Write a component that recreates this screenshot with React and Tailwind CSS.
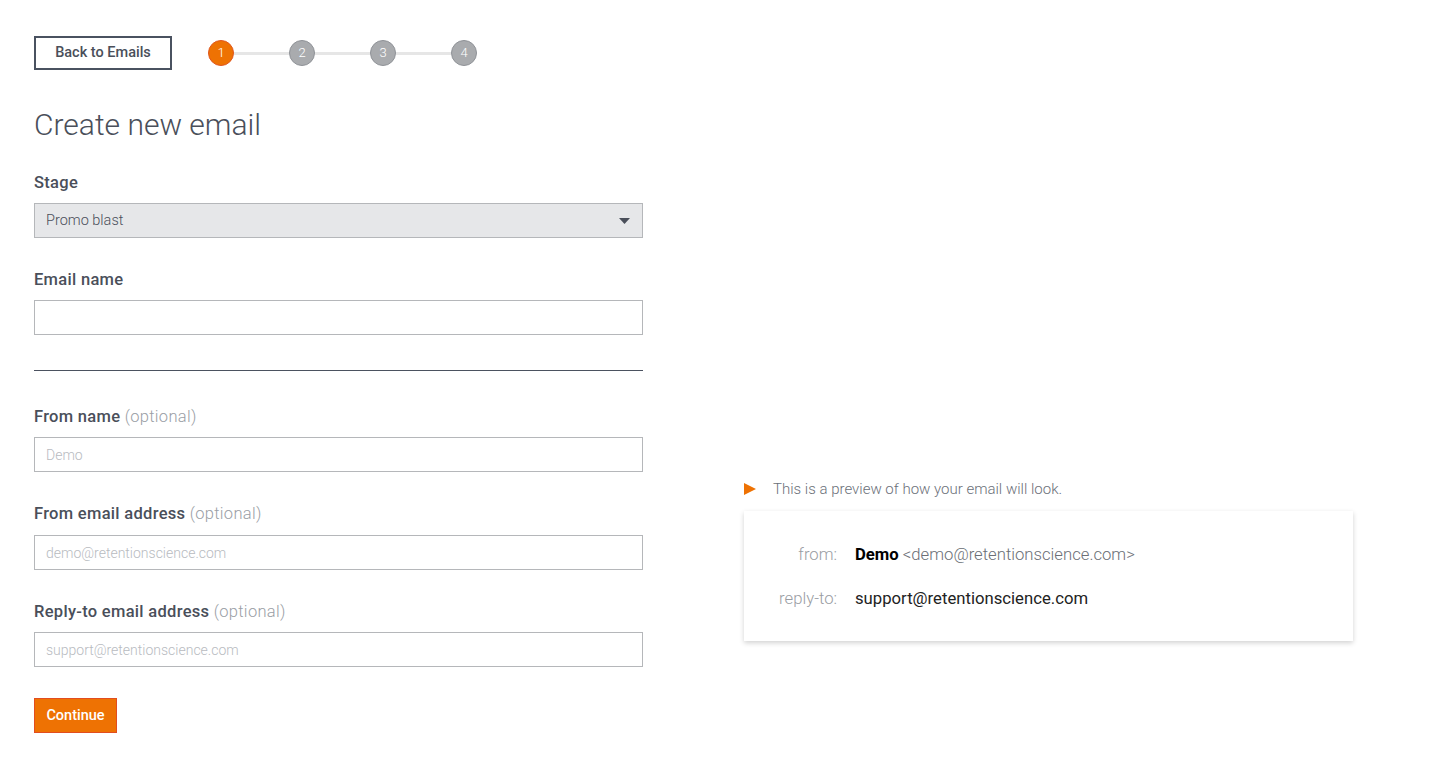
import React from "react";

const font = { fontFamily: "Roboto, 'Open Sans', Arial, sans-serif" };

function Step({ n, active }) {
  return (
    <div
      className={
        "w-[26px] h-[26px] rounded-full flex items-center justify-center text-[13px] font-light text-white border " +
        (active ? "bg-[#ee7203] border-[#e0561e]" : "bg-[#a9abae] border-[#8f9297]")
      }
    >
      {n}
    </div>
  );
}

function Line() {
  return <div className="w-[55px] h-[3px] bg-[#e6e6e6]" />;
}

function Label({ children, optional }) {
  return (
    <div className="text-[16.5px] leading-[20px] tracking-[0.3px] font-medium text-[#4a4f5a]">
      {children}
      {optional && <span className="font-light text-[#9a9ea5]"> (optional)</span>}
    </div>
  );
}

function Input({ placeholder }) {
  return (
    <input
      placeholder={placeholder}
      className="block w-full h-[35px] border border-[#b5b7ba] bg-white px-[11px] text-[14px] font-light text-[#4a4f5a] placeholder:text-[#b8bbbf] outline-none"
    />
  );
}

export default function App() {
  return (
    <div className="min-h-screen bg-white" style={font}>
      <div className="flex px-[34px] pt-[36px] gap-[101px]">
        <div className="w-[609px] shrink-0">
          <div className="flex items-center">
            <button className="w-[138px] h-[34px] border-2 border-[#4a5260] text-[14.5px] font-medium text-[#4a4f5a] flex items-center justify-center">
              Back to Emails
            </button>
            <div className="flex items-center ml-[36px]">
              <Step n="1" active />
              <Line />
              <Step n="2" />
              <Line />
              <Step n="3" />
              <Line />
              <Step n="4" />
            </div>
          </div>

          <h1 className="mt-[37px] text-[30px] leading-[36px] font-light text-[#4a4f5a]">
            Create new email
          </h1>

          <div className="mt-[30px]">
            <Label>Stage</Label>
          </div>
          <div className="mt-[10px] h-[35px] border border-[#b5b7ba] bg-[#e6e7e9] flex items-center justify-between pl-[11px] pr-[12px]">
            <span className="text-[14.5px] font-light text-[#4a4f5a]">Promo blast</span>
            <svg width="11" height="6" viewBox="0 0 11 6">
              <path d="M0 0 L11 0 L5.5 6 Z" fill="#4a4f5a" />
            </svg>
          </div>

          <div className="mt-[32px]">
            <Label>Email name</Label>
          </div>
          <div className="mt-[10px]">
            <Input placeholder="" />
          </div>

          <div className="mt-[35px] h-px bg-[#4b5260]" />

          <div className="mt-[36px]">
            <Label optional>From name</Label>
          </div>
          <div className="mt-[10px]">
            <Input placeholder="Demo" />
          </div>

          <div className="mt-[32px]">
            <Label optional>From email address</Label>
          </div>
          <div className="mt-[11px]">
            <Input placeholder="demo@retentionscience.com" />
          </div>

          <div className="mt-[32px]">
            <Label optional>Reply-to email address</Label>
          </div>
          <div className="mt-[10px]">
            <Input placeholder="support@retentionscience.com" />
          </div>

          <button className="mt-[31px] w-[83px] h-[35px] bg-[#ee7203] border border-[#e24d1f] text-white text-[14.5px] font-medium">
            Continue
          </button>
        </div>

        <div className="w-[609px] shrink-0 pt-[443px]">
          <div className="flex items-center h-[20px]">
            <svg width="12" height="12" viewBox="0 0 12 12">
              <path d="M0 0 L12 6 L0 12 Z" fill="#ee7203" />
            </svg>
            <span className="ml-[17px] text-[15px] font-light text-[#6b7079]">
              This is a preview of how your email will look.
            </span>
          </div>
          <div className="mt-[12px] bg-white shadow-[0_2px_5px_rgba(0,0,0,0.18)] pt-[34px] pb-[32px]">
            <div className="flex items-center h-[20px] text-[16.7px]">
              <div className="w-[93px] text-right font-light text-[#9a9da3]">from:</div>
              <div className="ml-[18px]">
                <span className="font-bold text-black">Demo</span>
                <span className="font-light text-[#6b6f76]"> &lt;demo@retentionscience.com&gt;</span>
              </div>
            </div>
            <div className="flex items-center h-[20px] text-[16.7px] mt-[24px]">
              <div className="w-[93px] text-right font-light text-[#9a9da3]">reply-to:</div>
              <div className="ml-[18px] text-[#222222]">support@retentionscience.com</div>
            </div>
          </div>
        </div>
      </div>
    </div>
  );
}
